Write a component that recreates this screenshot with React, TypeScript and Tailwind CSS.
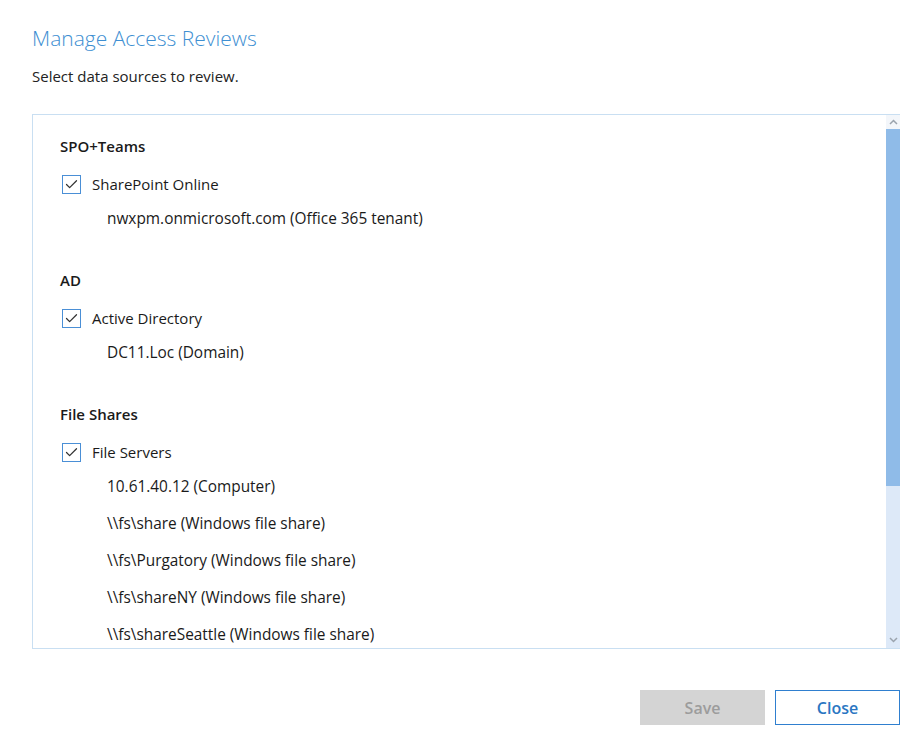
import { Check } from 'lucide-react';

const FONT = { fontFamily: '"Segoe UI", "Open Sans", "Noto Sans", sans-serif' };

interface Source {
    group: string;
    label: string;
    items: string[];
}

const sources: Source[] = [
    { group: 'SPO+Teams', label: 'SharePoint Online', items: ['nwxpm.onmicrosoft.com (Office 365 tenant)'] },
    { group: 'AD', label: 'Active Directory', items: ['DC11.Loc (Domain)'] },
    {
        group: 'File Shares',
        label: 'File Servers',
        items: [
            '10.61.40.12 (Computer)',
            '\\\\fs\\share (Windows file share)',
            '\\\\fs\\Purgatory (Windows file share)',
            '\\\\fs\\shareNY (Windows file share)',
            '\\\\fs\\shareSeattle (Windows file share)',
        ],
    },
];

function CheckBox() {
    return (
        <div className="w-[19px] h-[19px] border border-[#4a8fd6] bg-white flex items-center justify-center">
            <Check className="w-[15px] h-[15px] text-[#333]" strokeWidth={2} />
        </div>
    );
}

function ScrollBar() {
    return (
        <div className="w-[14px] flex flex-col bg-[#dde9f8]">
            {/* up arrow */}
            <div className="h-[14px] bg-[#f3f6fa] flex items-center justify-center">
                <svg width="9" height="6" viewBox="0 0 9 6">
                    <path d="M1 5 L4.5 1.5 L8 5" fill="none" stroke="#9aa3ad" strokeWidth="1.5" />
                </svg>
            </div>
            <div className="h-[357px] bg-[#8fbbe8]" />
            <div className="flex-1" />
            <div className="h-[16px] flex items-center justify-center">
                <svg width="9" height="6" viewBox="0 0 9 6">
                    <path d="M1 1 L4.5 4.5 L8 1" fill="none" stroke="#9aa3ad" strokeWidth="1.5" />
                </svg>
            </div>
        </div>
    );
}

export default function App() {
    return (
        <div className="w-[917px] h-[745px] bg-white overflow-hidden pl-[32px] pr-[17px] pt-[24px]" style={FONT}>
            {/* Header */}
            <h1 className="text-[21px] leading-[28px] font-light text-[#3e8fd2]">Manage Access Reviews</h1>
            <p className="mt-[14px] text-[15px] leading-[20px] text-[#222]">Select data sources to review.</p>

            {/* Data sources */}
            <div className="mt-[28px] h-[535px] border border-[#c9dff2] border-r-0 flex">
                <div className="flex-1 overflow-hidden pl-[27px] pt-[19px]">
                    {sources.map((s, i) => (
                        <div key={s.group} className={i > 0 ? 'mt-[31px]' : ''}>
                            <div className="h-[24px] flex items-center text-[15px] font-semibold text-[#1a1a1a]">{s.group}</div>
                            <div className="mt-[14px] h-[24px] flex items-center gap-[11px] pl-[2px]">
                                <CheckBox />
                                <span className="text-[15px] text-[#1a1a1a]">{s.label}</span>
                            </div>
                            <div className="mt-[4px]">
                                {s.items.map(item => (
                                    <div key={item} className="h-[37px] flex items-center pl-[47px] text-[15.4px] text-[#1a1a1a]">
                                        {item}
                                    </div>
                                ))}
                            </div>
                        </div>
                    ))}
                </div>
                <ScrollBar />
            </div>

            {/* Footer */}
            <div className="mt-[41px] flex justify-end gap-[10px]">
                <button className="w-[125px] h-[35px] bg-[#d4d4d4] text-[#9c9c9c] text-[16px] font-semibold">Save</button>
                <button className="w-[125px] h-[35px] bg-white border border-[#2f7fcf] text-[#2a76c2] text-[16px] font-semibold">
                    Close
                </button>
            </div>
        </div>
    );
}
